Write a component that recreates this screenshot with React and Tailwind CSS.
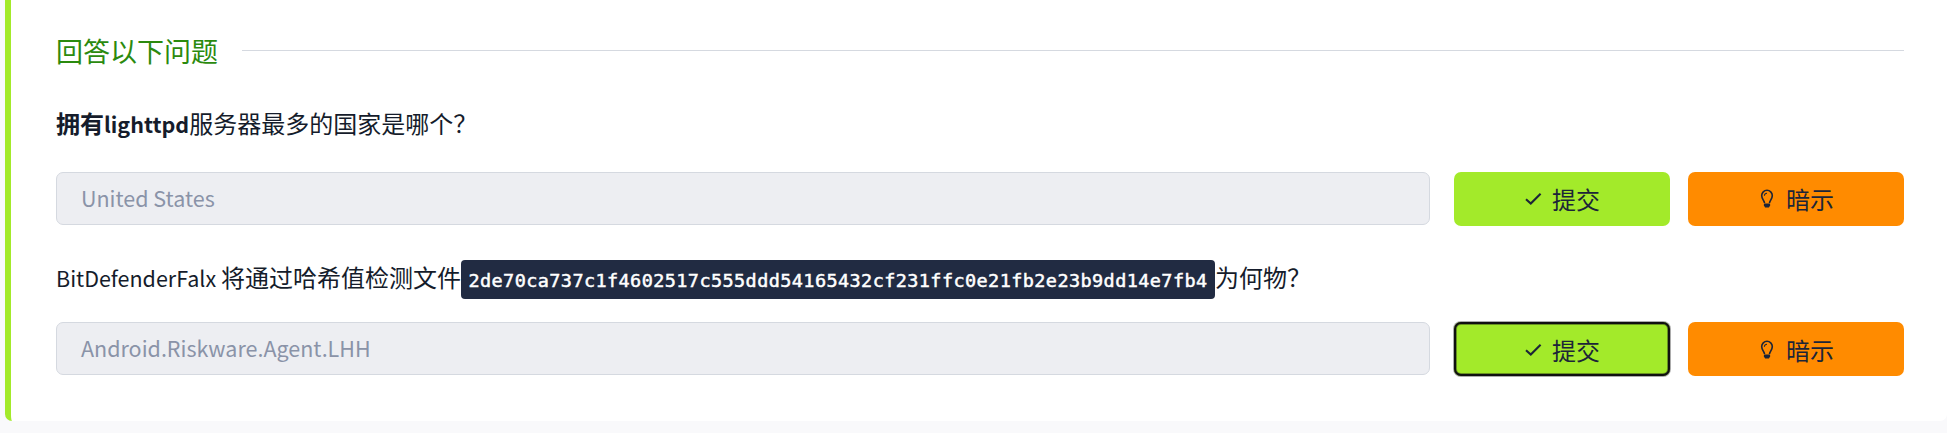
const CJK = "font-['Noto_Sans_CJK_SC',sans-serif]";

function CheckIcon() {
  return (
    <svg className="h-[18px] w-[17px]" viewBox="0 0 17 18" fill="none" stroke="currentColor" strokeWidth="2.1">
      <path d="M1 9.2 L5.8 13.6 L15.6 3.8" />
    </svg>
  );
}

function BulbIcon() {
  return (
    <svg className="h-[20px] w-[14px]" viewBox="0 0 14 20" fill="none" stroke="currentColor">
      <path
        d="M4.5 14 C4.3 11.6 1.7 10.2 1.7 6.6 A5.3 5.3 0 0 1 12.3 6.6 C12.3 10.2 9.7 11.6 9.5 14"
        strokeWidth="1.6"
      />
      <path d="M4.4 6.8 A2.6 2.6 0 0 1 7 4.2" strokeWidth="1.1" />
      <path d="M3.9 14.6 H10.1 V16.6 L8.9 18.4 H5.1 L3.9 16.6 Z" fill="currentColor" stroke="none" />
    </svg>
  );
}

function AnswerRow({ value, focused }) {
  return (
    <div className="flex h-[54px] items-start">
      <div className="flex h-[53px] w-[1374px] items-center rounded-[7px] border border-[#d5d9e0] bg-[#edeef2] pb-[2px] pl-6 text-[21.5px] leading-none text-[#8a93a8]">
        <span>{value}</span>
      </div>
      <button
        className={
          "ml-6 flex h-[54px] w-[216px] items-center justify-center gap-[10px] rounded-[7px] bg-[#a3ea2a] pl-px text-2xl leading-none text-[#1c2538] " +
          (focused
            ? "pt-px shadow-[0_0_0_1px_rgba(16,16,16,0.35),inset_0_0_0_2px_#101010,inset_0_0_0_3px_rgba(16,16,16,0.4)]"
            : "")
        }
      >
        <CheckIcon />
        <span>提交</span>
      </button>
      <button
        className={
          "ml-[18px] flex h-[54px] w-[216px] items-center justify-center gap-3 rounded-[7px] bg-[#ff8b00] pl-[2px] text-2xl leading-none text-[#1c2538] " +
          (focused ? "pt-px" : "")
        }
      >
        <BulbIcon />
        <span>暗示</span>
      </button>
    </div>
  );
}

export default function App() {
  return (
    <div className={"h-[433px] w-[1947px] overflow-hidden bg-[#f9f9fb] pl-[5px] text-[#151c2b] " + CJK} lang="zh-CN">
      <div className="h-[421px] rounded-b-[7px] border-l-[6px] border-[#a3ea2a] bg-white pr-[43px] pl-[45px]">
        <div className="flex h-[100px] items-center gap-6">
          <h2 className="text-[27px] leading-none text-[#2b8a0e]">回答以下问题</h2>
          <div className="h-px flex-1 bg-[#d5d9e0]" />
        </div>
        <div className="flex h-[72px] items-baseline pt-[5px] text-2xl leading-9 whitespace-pre">
          <strong>拥有<span className="text-[21.5px]">lighttpd</span></strong>
          <span>服务器最多的国家是哪个？</span>
        </div>
        <AnswerRow value="United States" />
        <div className="flex h-[96px] items-start pt-[34px] text-2xl leading-9 whitespace-pre">
          <span className="-mt-px"><span className="text-[21.5px]">BitDefenderFalx </span>将通过哈希值检测文件</span>
          <code className="flex h-[39px] w-[754px] items-center justify-center rounded-[4px] bg-[#212b42] pt-[2px] font-['DejaVu_Sans_Mono',monospace] text-[18.5px] tracking-[0.41px] text-white [-webkit-text-stroke:0.5px_white]">
            2de70ca737c1f4602517c555ddd54165432cf231ffc0e21fb2e23b9dd14e7fb4
          </code>
          <span className="-mt-px">为何物？</span>
        </div>
        <AnswerRow value="Android.Riskware.Agent.LHH" focused />
      </div>
    </div>
  );
}
